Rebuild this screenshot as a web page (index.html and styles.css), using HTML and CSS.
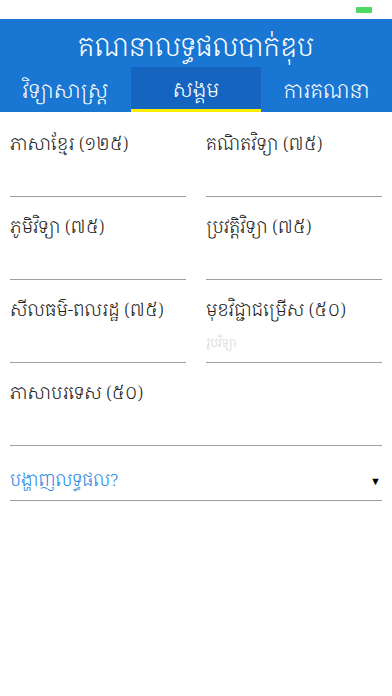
FILE: index.html
```html
<!DOCTYPE html>
<html lang="km">
<head>
    <meta charset="UTF-8">
    <meta name="viewport" content="width=device-width, initial-scale=1.0">
    <link rel="stylesheet" href="styles.css">
</head>
<body>
    <div class="status-bar">
        <div class="battery"></div>
    </div>

    <header class="app-header">
        <h1 class="app-title">គណនាលទ្ធផលបាក់ឌុប</h1>
        <nav class="tabs">
            <div class="tab">វិទ្យាសាស្ត្រ</div>
            <div class="tab active">សង្គម</div>
            <div class="tab">ការគណនា</div>
        </nav>
    </header>

    <main class="form">
        <div class="field">
            <label class="field-label">ភាសាខ្មែរ (១២៥)</label>
            <div class="field-input"></div>
        </div>
        <div class="field">
            <label class="field-label">គណិតវិទ្យា (៧៥)</label>
            <div class="field-input"></div>
        </div>
        <div class="field">
            <label class="field-label">ភូមិវិទ្យា (៧៥)</label>
            <div class="field-input"></div>
        </div>
        <div class="field">
            <label class="field-label">ប្រវត្តិវិទ្យា (៧៥)</label>
            <div class="field-input"></div>
        </div>
        <div class="field">
            <label class="field-label">សីលធម៌-ពលរដ្ឋ (៧៥)</label>
            <div class="field-input"></div>
        </div>
        <div class="field">
            <label class="field-label">មុខវិជ្ជាជម្រើស (៥០)</label>
            <div class="field-input"><span class="placeholder">រូបវិទ្យា</span></div>
        </div>
        <div class="field wide">
            <label class="field-label">ភាសាបរទេស (៥០)</label>
            <div class="field-input"></div>
        </div>

        <div class="dropdown">
            <span class="dropdown-text">បង្ហាញលទ្ធផល?</span>
            <span class="dropdown-arrow">&#9660;</span>
        </div>
    </main>
</body>
</html>
```

FILE: styles.css
```css
/* page */
body {
    margin: 0;
    background-color: #ffffff;
    font-family: "Noto Serif Khmer", "Khmer OS", "Noto Sans Khmer", "DejaVu Sans", sans-serif;
    font-weight: 300;
    color: #212121;
}

/* status bar */
.status-bar {
    height: 19px;
    display: flex;
    justify-content: flex-end;
    align-items: center;
    padding-right: 20px;
}

.battery {
    width: 16px;
    height: 6px;
    background: #4cd964;
    border-radius: 1px;
}

/* header with title and tabs */
.app-header {
    background-color: #1976d2;
    color: #ffffff;
}

.app-title {
    margin: 0;
    height: 48px;
    font-size: 26px;
    font-weight: 300;
    text-align: center;
    line-height: 54px;
}

.tabs {
    display: flex;
    height: 45px;
}

.tab {
    flex: 1;
    display: flex;
    justify-content: center;
    align-items: center;
    font-size: 20px;
    padding-top: 2px;
    box-sizing: border-box;
}

.tab.active {
    background-color: #1565c0;
    border-bottom: 3px solid #ffee00;
}

/* form */
.form {
    display: grid;
    grid-template-columns: 1fr 1fr;
    column-gap: 20px;
    padding: 2px 10px 0;
}

.field {
    height: 83px;
    display: flex;
    flex-direction: column;
}

.field.wide {
    grid-column: span 2;
}

.field-label {
    font-size: 17.5px;
    padding-top: 16px;
    line-height: 26px;
}

.field-input {
    flex: 1;
    border-bottom: 1px solid #9e9e9e;
    display: flex;
    align-items: center;
}

.placeholder {
    font-size: 12px;
    color: #d4d4d4;
}

.dropdown {
    grid-column: span 2;
    display: flex;
    justify-content: space-between;
    align-items: flex-end;
    height: 55px;
    padding-bottom: 7px;
    border-bottom: 1px solid #9e9e9e;
    box-sizing: border-box;
}

.dropdown-text {
    font-size: 17px;
    line-height: 26px;
    color: #1e88e5;
}

.dropdown-arrow {
    font-size: 11px;
    line-height: 24px;
    color: #000000;
    padding-right: 1px;
}
```
